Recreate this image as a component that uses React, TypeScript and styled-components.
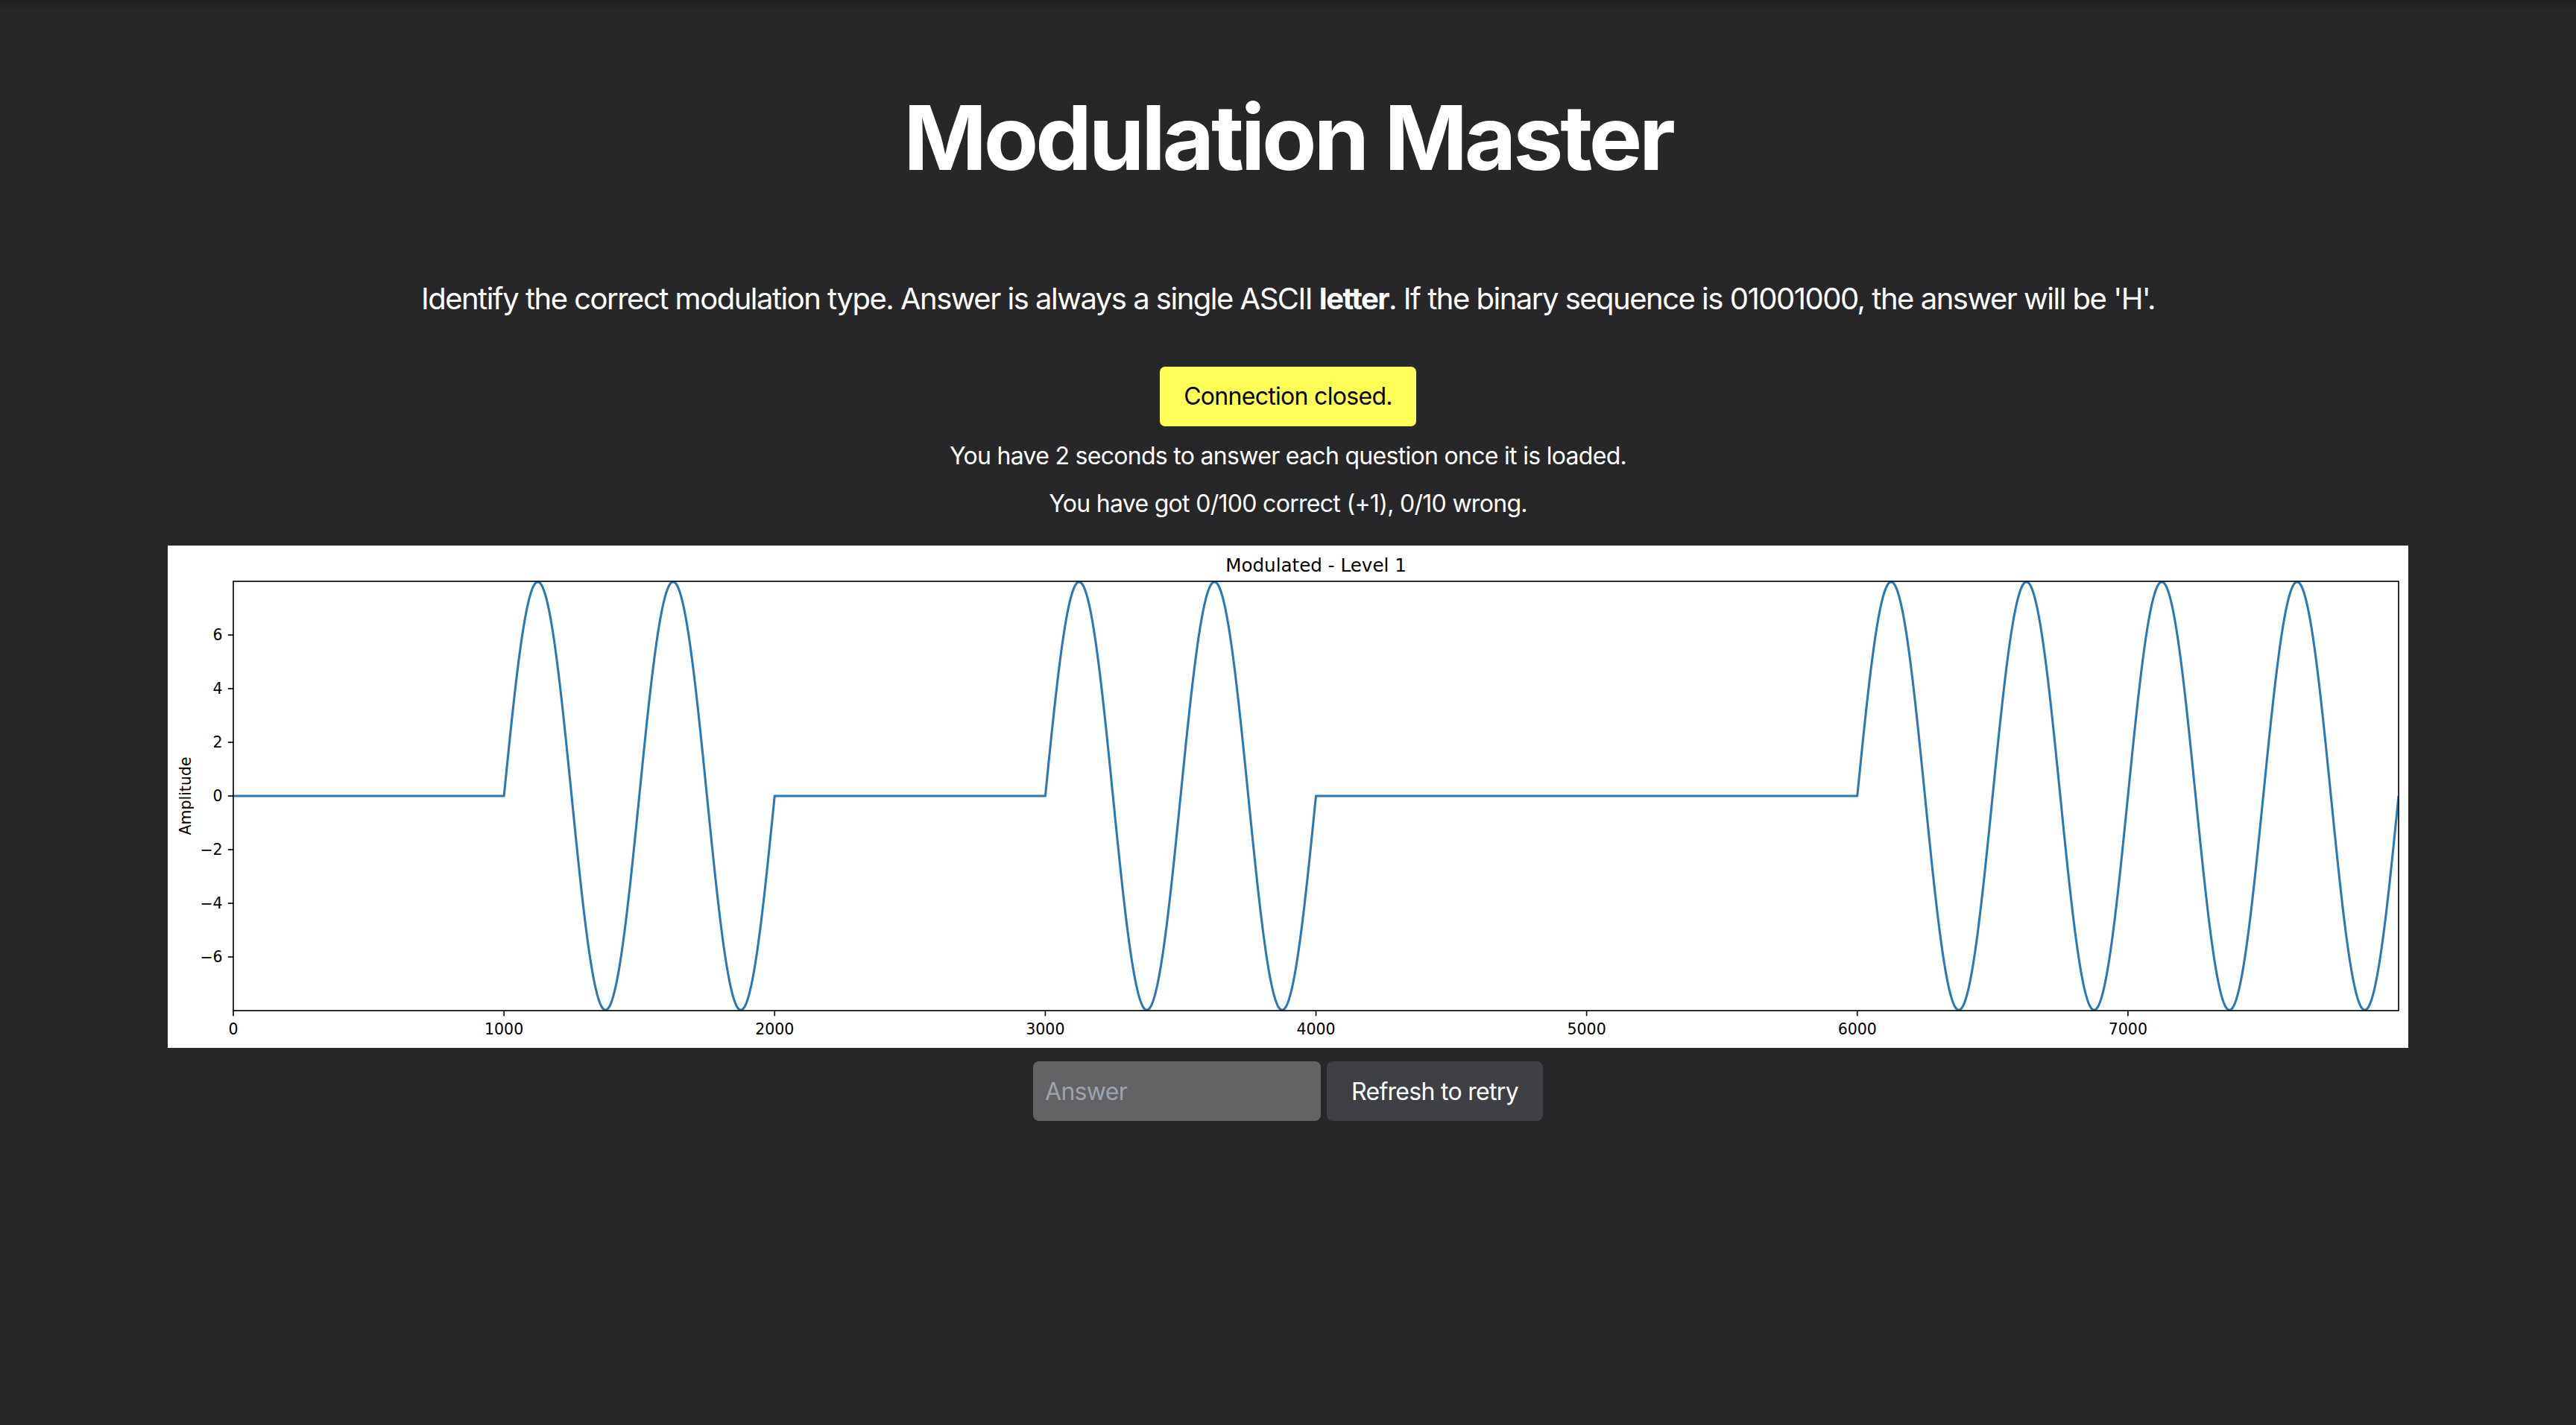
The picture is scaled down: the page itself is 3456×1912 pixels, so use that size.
import React from "react";
import styled, { createGlobalStyle } from "styled-components";

const GlobalStyle = createGlobalStyle`
  html, body {
    margin: 0;
    padding: 0;
    background: #27272a;
  }
  body {
    font-family: Inter, "Noto Sans", "Liberation Sans", sans-serif;
    color: #ffffff;
    -webkit-font-smoothing: antialiased;
  }
`;

const Page = styled.main`
  min-height: 1912px;
  box-sizing: border-box;
  display: flex;
  flex-direction: column;
  align-items: center;
  background: linear-gradient(#1f1f21 0px, #27272a 12px);
  padding-top: 125px;
`;

const Title = styled.h1`
  margin: 0;
  font-size: 120px;
  line-height: 1;
  font-weight: 700;
  letter-spacing: -4.2px;
  color: #ffffff;
`;

const Instructions = styled.p`
  margin: 128px 0 0;
  font-size: 40px;
  line-height: 56px;
  letter-spacing: -1.5px;
  color: #ffffff;

  b {
    font-weight: 700;
  }
`;

const StatusBadge = styled.div`
  margin-top: 63px;
  padding: 16px 32px;
  background: #ffff57;
  color: #000000;
  border-radius: 7px;
  font-size: 32px;
  line-height: 48px;
  letter-spacing: -0.7px;
`;

const InfoLine = styled.p`
  margin: 16px 0 0;
  font-size: 32px;
  line-height: 48px;
  letter-spacing: -0.7px;
  color: #ffffff;
`;

const ChartFrame = styled.figure`
  margin: 32px 0 0;
  width: 3006px;
  height: 674px;
  background: #ffffff;
  display: block;

  svg {
    display: block;
  }
`;

const AnswerRow = styled.form`
  margin-top: 18px;
  display: flex;
  gap: 8px;
`;

const AnswerInput = styled.input`
  box-sizing: border-box;
  width: 386px;
  height: 80px;
  padding: 0 16px;
  border: none;
  outline: none;
  border-radius: 8px;
  background: #636366;
  color: #ffffff;
  font-family: inherit;
  font-size: 32px;
  letter-spacing: -0.7px;

  &::placeholder {
    color: #9ca3af;
  }
`;

const RetryButton = styled.button`
  box-sizing: border-box;
  height: 80px;
  padding: 0 33px;
  border: none;
  border-radius: 8px;
  background: #3f3f46;
  color: #ffffff;
  font-family: inherit;
  font-size: 32px;
  letter-spacing: -0.7px;
  cursor: pointer;
`;

const PT = 2.05;
const AX_LEFT = 88;
const AX_RIGHT = 2993;
const AX_TOP = 48;
const AX_BOTTOM = 624;
const X_MAX = 8000;
const Y_HALF = 8;
const BITS = [0, 1, 0, 1, 0, 0, 1, 1];
const TICK_LEN = 3.5 * PT;
const TICK_PAD = 3.5 * PT;
const TICK_SIZE = 10 * PT;
const TITLE_SIZE = 12 * PT;

const px = (t: number) => AX_LEFT + (t / X_MAX) * (AX_RIGHT - AX_LEFT);
const py = (v: number) =>
  (AX_TOP + AX_BOTTOM) / 2 - (v / Y_HALF) * ((AX_BOTTOM - AX_TOP) / 2);

const buildSignal = () => {
  const pts: string[] = [];
  for (let t = 0; t <= X_MAX; t += 2) {
    const bit = BITS[Math.min(BITS.length - 1, Math.floor(t / 1000))];
    const v = bit ? 7.98 * Math.sin((2 * Math.PI * t) / 500) : 0;
    pts.push(`${px(t).toFixed(2)},${py(v).toFixed(2)}`);
  }
  return pts.join(" ");
};

const TICK_FONT = `"DejaVu Sans", "Liberation Sans", sans-serif`;

const SignalChart: React.FC = () => {
  const yTicks = [-6, -4, -2, 0, 2, 4, 6];
  const xTicks = [0, 1000, 2000, 3000, 4000, 5000, 6000, 7000];
  const signal = buildSignal();
  return (
    <svg width="3006" height="674" viewBox="0 0 3006 674">
      <defs>
        <clipPath id="axes-clip">
          <rect
            x={AX_LEFT}
            y={AX_TOP}
            width={AX_RIGHT - AX_LEFT}
            height={AX_BOTTOM - AX_TOP}
          />
        </clipPath>
      </defs>
      <text
        x={(AX_LEFT + AX_RIGHT) / 2}
        y={AX_TOP - 6 * PT - 1}
        textAnchor="middle"
        fontFamily={TICK_FONT}
        fontSize={TITLE_SIZE}
        fill="#000"
      >
        Modulated - Level 1
      </text>
      <polyline
        points={signal}
        fill="none"
        stroke="#2a78b6"
        strokeWidth={1.5 * PT}
        strokeLinejoin="round"
        clipPath="url(#axes-clip)"
      />
      <rect
        x={AX_LEFT}
        y={AX_TOP}
        width={AX_RIGHT - AX_LEFT}
        height={AX_BOTTOM - AX_TOP}
        fill="none"
        stroke="#000"
        strokeWidth={0.8 * PT}
      />
      {yTicks.map((v) => (
        <g key={`y${v}`}>
          <line
            x1={AX_LEFT - TICK_LEN}
            x2={AX_LEFT}
            y1={py(v)}
            y2={py(v)}
            stroke="#000"
            strokeWidth={0.8 * PT}
          />
          <text
            x={AX_LEFT - TICK_LEN - TICK_PAD}
            y={py(v) + TICK_SIZE * 0.36}
            textAnchor="end"
            fontFamily={TICK_FONT}
            fontSize={TICK_SIZE}
            fill="#000"
          >
            {v < 0 ? `\u2212${Math.abs(v)}` : `${v}`}
          </text>
        </g>
      ))}
      {xTicks.map((t) => (
        <g key={`x${t}`}>
          <line
            x1={px(t)}
            x2={px(t)}
            y1={AX_BOTTOM}
            y2={AX_BOTTOM + TICK_LEN}
            stroke="#000"
            strokeWidth={0.8 * PT}
          />
          <text
            x={px(t)}
            y={AX_BOTTOM + TICK_LEN + TICK_PAD + TICK_SIZE * 0.73 + 3}
            textAnchor="middle"
            fontFamily={TICK_FONT}
            fontSize={TICK_SIZE}
            fill="#000"
          >
            {t}
          </text>
        </g>
      ))}
      <text
        transform={`translate(31 ${(AX_TOP + AX_BOTTOM) / 2}) rotate(-90)`}
        textAnchor="middle"
        fontFamily={TICK_FONT}
        fontSize={TICK_SIZE}
        fill="#000"
      >
        Amplitude
      </text>
    </svg>
  );
};

const App: React.FC = () => {
  return (
    <>
      <GlobalStyle />
      <Page>
        <Title>Modulation Master</Title>
        <Instructions>
          Identify the correct modulation type. Answer is always a single ASCII{" "}
          <b>letter</b>. If the binary sequence is 01001000, the answer will be 'H'.
        </Instructions>
        <StatusBadge>Connection closed.</StatusBadge>
        <InfoLine>You have 2 seconds to answer each question once it is loaded.</InfoLine>
        <InfoLine>You have got 0/100 correct (+1), 0/10 wrong.</InfoLine>
        <ChartFrame>
          <SignalChart />
        </ChartFrame>
        <AnswerRow onSubmit={(e) => e.preventDefault()}>
          <AnswerInput type="text" placeholder="Answer" />
          <RetryButton type="button">Refresh to retry</RetryButton>
        </AnswerRow>
      </Page>
    </>
  );
};

export default App;
